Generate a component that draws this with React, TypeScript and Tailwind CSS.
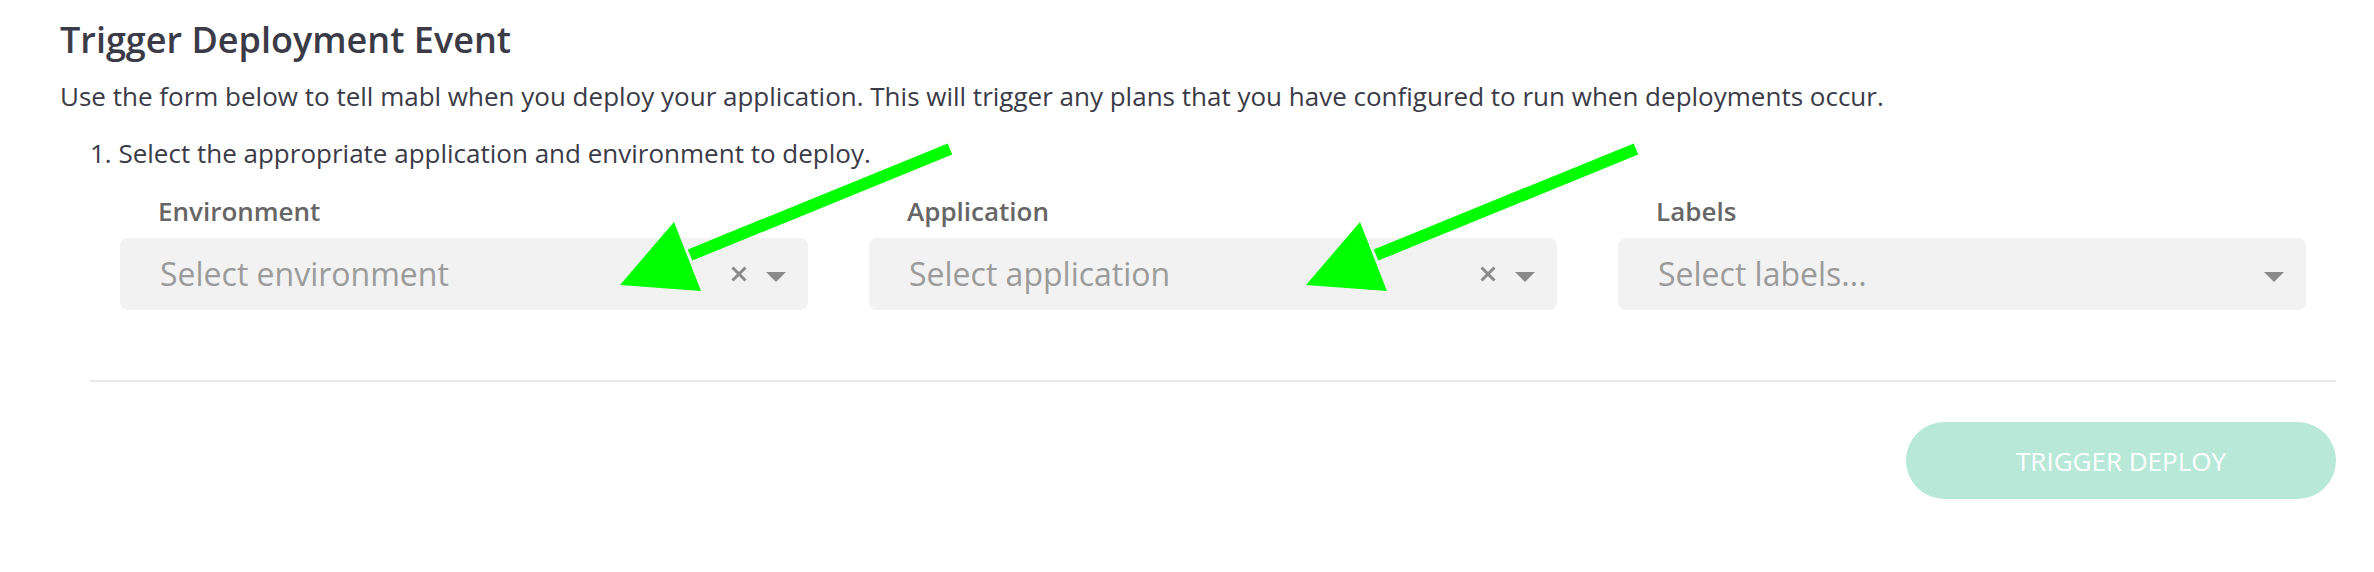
import React from 'react';

interface SelectProps {
  label: string;
  placeholder: string;
  clearable?: boolean;
}

function ClearIcon() {
  return (
    <svg width="16" height="16" viewBox="0 0 16 16" className="shrink-0">
      <path d="M1.5 1.5l13 13M14.5 1.5l-13 13" stroke="#8a8a8a" strokeWidth="3" fill="none" />
    </svg>
  );
}

function CaretIcon() {
  return (
    <svg width="20" height="10" viewBox="0 0 20 10" className="shrink-0 mt-[6px]">
      <path d="M0 0h20L10 10z" fill="#8a8a8a" />
    </svg>
  );
}

function FakeSelect({ label, placeholder, clearable }: SelectProps) {
  return (
    <div className="flex flex-col">
      <label className="pl-[38px] text-[26px] leading-[36px] font-semibold text-[#666666]">{label}</label>
      <div className="mt-[9px] h-[72px] rounded-[8px] bg-[#f2f2f2] flex items-center pl-[40px] pr-[22px]">
        <span className="flex-1 text-[32px] leading-[44px] text-[#9b9b9b]">{placeholder}</span>
        {clearable && (
          <div className="mr-[19px] flex items-center">
            <ClearIcon />
          </div>
        )}
        <CaretIcon />
      </div>
    </div>
  );
}

function Arrow({ dx }: { dx: number }) {
  // green annotation arrow, drawn over the form
  return (
    <g transform={`translate(${dx} 0)`}>
      <line x1="950" y1="149" x2="690" y2="255" stroke="#00ff00" strokeWidth="12" />
      <polygon points="620,285 674,222 701,291" fill="#00ff00" />
    </g>
  );
}

export default function App() {
  return (
    <div className="relative w-[2374px] h-[572px] bg-white pl-[60px] pt-[18px] font-['Open_Sans',sans-serif] overflow-hidden">
      <h1 className="text-[36px] leading-[44px] font-semibold text-[#3b3b47]">Trigger Deployment Event</h1>
      <p className="mt-[16px] text-[26px] leading-[36px] text-[#3b3b47]">
        Use the form below to tell mabl when you deploy your application. This will trigger any plans that you have configured to run when deployments occur.
      </p>

      <div className="ml-[30px] w-[2246px]">
        <p className="mt-[21px] text-[26px] leading-[36px] text-[#3b3b47]">
          1. Select the appropriate application and environment to deploy.
        </p>

        <div className="mt-[22px] px-[30px] grid grid-cols-3 gap-[61px]">
          <FakeSelect label="Environment" placeholder="Select environment" clearable />
          <FakeSelect label="Application" placeholder="Select application" clearable />
          <FakeSelect label="Labels" placeholder="Select labels..." />
        </div>

        <div className="mt-[70px] h-[2px] bg-[#e8e8e8]" />

        <div className="mt-[40px] flex justify-end">
          <button className="w-[430px] h-[77px] rounded-full bg-[#b8e8d7] text-white text-[26px] leading-[36px]">
            TRIGGER DEPLOY
          </button>
        </div>
      </div>

      <svg className="absolute inset-0 pointer-events-none" width="2374" height="572">
        <Arrow dx={0} />
        <Arrow dx={686} />
      </svg>
    </div>
  );
}
